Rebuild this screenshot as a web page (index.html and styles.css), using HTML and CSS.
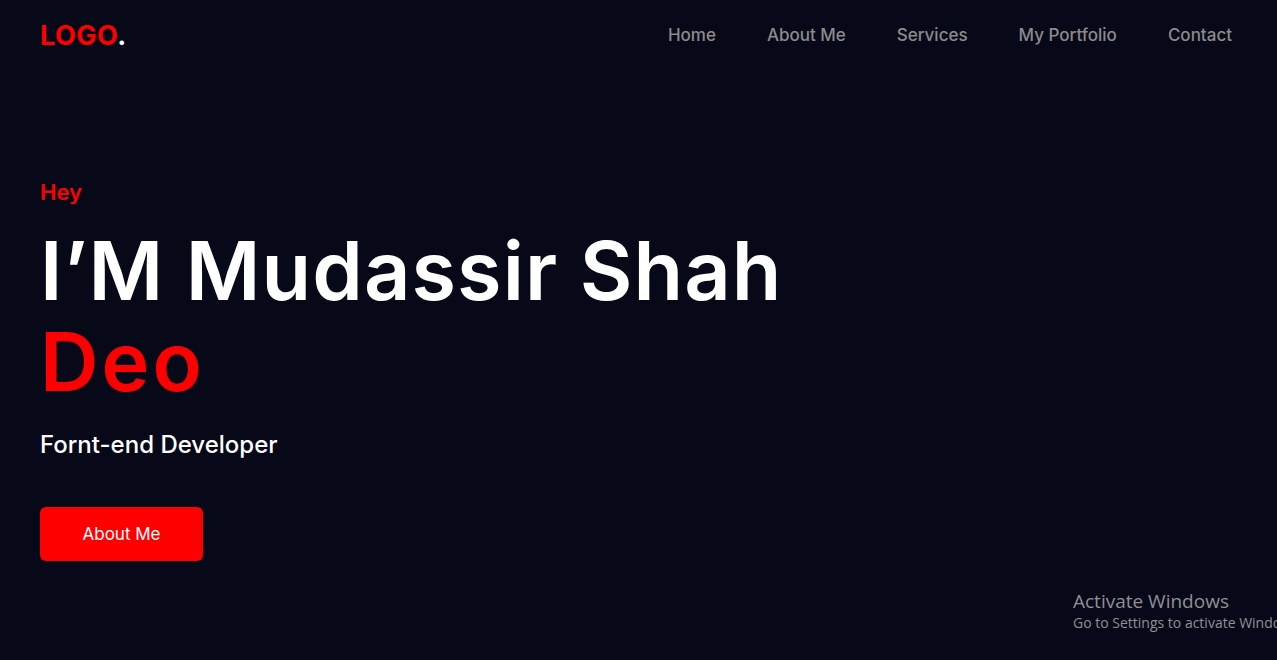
FILE: index.html
```html
<!DOCTYPE html>
<html lang="en">
<head>
<meta charset="utf-8">
<title>Portfolio</title>
<link rel="stylesheet" href="styles.css">
</head>
<body>
<header class="header">
  <a class="logo" href="#">LOGO<span class="logo-dot">.</span></a>
  <nav class="nav">
    <a href="#">Home</a>
    <a href="#">About Me</a>
    <a href="#">Services</a>
    <a href="#">My Portfolio</a>
    <a href="#">Contact</a>
  </nav>
</header>
<main class="hero">
  <p class="hey">Hey</p>
  <h1 class="title">I’M Mudassir Shah<br><span class="accent">Deo</span></h1>
  <p class="role">Fornt-end Developer</p>
  <a class="btn" href="#">About Me</a>
</main>
<div class="watermark">
  <div class="wm-title">Activate Windows</div>
  <div class="wm-sub">Go to Settings to activate Windows.</div>
</div>
</body>
</html>
```
FILE: styles.css
```css
* { box-sizing: border-box; margin: 0; padding: 0; }
html, body { height: 100%; }
body {
  background: #070919;
  font-family: Inter, "Noto Sans", sans-serif;
  color: #fff;
  overflow: hidden;
}
a { text-decoration: none; color: inherit; }
.header {
  display: flex;
  justify-content: space-between;
  align-items: center;
  height: 70px;
  padding: 0 45px 0 40px;
}
.logo {
  color: #ff0000;
  font-size: 27px;
  font-weight: 700;
  letter-spacing: 0.5px;
}
.logo-dot { color: #fff; }
.nav { display: flex; gap: 51px; }
.nav a {
  color: #8b8b8b;
  font-size: 17px;
  font-weight: 500;
}
.hero {
  padding: 108px 40px 0;
  display: flex;
  flex-direction: column;
  align-items: flex-start;
}
.hey {
  color: #ff0000;
  font-size: 22px;
  font-weight: 600;
  line-height: 28px;
}
.title {
  margin-top: 20px;
  font-size: 81px;
  font-weight: 600;
  line-height: 91px;
  letter-spacing: 1.1px;
}
.accent { color: #ff0000; letter-spacing: 3px; }
.role {
  margin-top: 22px;
  font-size: 24px;
  font-weight: 500;
}
.btn {
  margin-top: 48px;
  width: 163px;
  height: 54px;
  display: flex;
  align-items: center;
  justify-content: center;
  background: #ff0000;
  color: #fff;
  border-radius: 6px;
  font-size: 17px;
}
.watermark {
  position: absolute;
  left: 1073px;
  top: 589px;
  color: #8f9095;
  font-family: "Open Sans", sans-serif;
  white-space: nowrap;
}
.wm-title { font-size: 19px; line-height: 24px; }
.wm-sub { font-size: 14px; line-height: 20px; }
```
